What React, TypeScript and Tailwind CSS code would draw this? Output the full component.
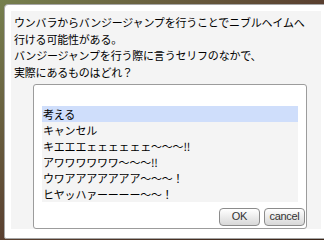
const QUESTION = [
  'ウンバラからバンジージャンプを行うことでニブルヘイムへ',
  '行ける可能性がある。',
  'バンジージャンプを行う際に言うセリフのなかで、',
  '実際にあるものはどれ？',
];

const CHOICES = [
  '考える',
  'キャンセル',
  'キエエエェェェェェェ〜〜〜!!',
  'アワワワワワワ〜〜〜!!',
  'ウワアアアアアアア〜〜〜！',
  'ヒヤッハァーーーー〜〜！',
];

const jpFont = { fontFamily: '"Noto Sans CJK JP", "Noto Sans", sans-serif' };

function DialogButton({ label, width }: { label: string; width: string }) {
  return (
    <button
      className={`${width} h-[18px] rounded-[4px] border border-[#8c8c8c] bg-gradient-to-b from-white to-[#d8d8d8] text-[11px] leading-none tracking-[-0.3px] text-[#333] font-['Liberation_Sans',Arial,sans-serif]`}
    >
      {label}
    </button>
  );
}

export default function App() {
  const selected = 0;

  return (
    <div className="w-[324px] h-[240px] overflow-hidden bg-gradient-to-br from-[#76804e] via-[#5a4030] to-[#3a2418] pt-[4px] pl-[4px]">
      <div className="w-[324px] h-[235px] rounded-tl-[4px] rounded-bl-[2px] border border-[#a6a6a6] bg-white p-[6px]">
        <div className="bg-[#f4f4f4] pt-[3px] pl-[3px]" style={jpFont}>
          <div className="text-[11px] leading-[16.7px] tracking-[-0.2px] text-black">
            {QUESTION.map((line) => (
              <div key={line} className="whitespace-nowrap">{line}</div>
            ))}
          </div>

          <div className="mt-[3px] ml-[19px] mb-[-17px] w-[274px] h-[145px] rounded-[3px] border border-[#9c9c9c] bg-white pt-[21px] pl-[8px] pr-[1px] flex flex-col">
            <ul className="w-[256px] h-[96px] bg-[#f4f4f4]">
              {CHOICES.map((c, i) => (
                <li
                  key={c}
                  className={`h-[16px] pl-[1px] text-[11px] leading-[16px] tracking-[-0.2px] text-black whitespace-nowrap ${
                    i === selected ? 'bg-[#cfdefb]' : ''
                  }`}
                >
                  {c}
                </li>
              ))}
            </ul>
            <div className="mt-[6px] flex justify-end gap-[4px]">
              <DialogButton label="OK" width="w-[41px]" />
              <DialogButton label="cancel" width="w-[41px]" />
            </div>
          </div>
        </div>
      </div>
    </div>
  );
}
